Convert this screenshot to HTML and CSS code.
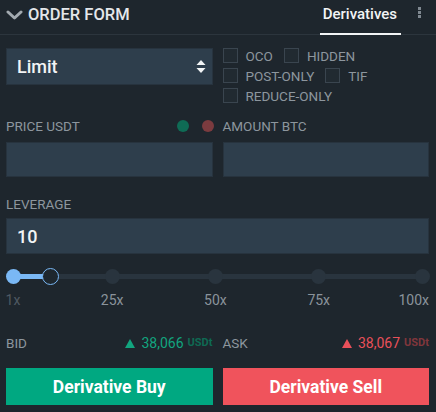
FILE: index.html
```html
<!DOCTYPE html>
<html>
<head>
<meta charset="utf-8">
<link rel="stylesheet" href="styles.css">
</head>
<body>
<div class="panel">
  <header class="head">
    <div class="title">
      <svg class="chev" width="17" height="10" viewBox="0 0 17 10"><polyline points="2,2 8.5,8 15,2" fill="none" stroke="#a3aab0" stroke-width="3" stroke-linecap="round" stroke-linejoin="round"/></svg>
      <span>ORDER FORM</span>
    </div>
    <div class="tabs">
      <div class="tab">Derivatives</div>
      <div class="kebab"><i></i><i></i><i></i></div>
    </div>
  </header>

  <div class="grid row-type">
    <div class="select">
      <span>Limit</span>
      <svg width="10" height="14" viewBox="0 0 10 14"><polygon points="5,0 9.5,5 0.5,5" fill="#f2f4f5"/><polygon points="0.5,8 9.5,8 5,13" fill="#f2f4f5"/></svg>
    </div>
    <div class="checks">
      <div class="crow"><label class="cb"><span class="box"></span>OCO</label><label class="cb"><span class="box"></span>HIDDEN</label></div>
      <div class="crow"><label class="cb"><span class="box"></span>POST-ONLY</label><label class="cb"><span class="box"></span>TIF</label></div>
      <div class="crow"><label class="cb"><span class="box"></span>REDUCE-ONLY</label></div>
    </div>
  </div>

  <div class="grid row-labels">
    <div class="lbl-row"><span class="lbl">PRICE USDT</span><span class="dots"><i class="dot g"></i><i class="dot r"></i></span></div>
    <div class="lbl-row"><span class="lbl">AMOUNT BTC</span></div>
  </div>
  <div class="grid row-inputs">
    <div class="input"></div>
    <div class="input"></div>
  </div>

  <div class="lbl lev-lbl">LEVERAGE</div>
  <div class="input wide"><span>10</span></div>

  <div class="slider">
    <div class="track">
      <div class="fill" style="width: 9.09%"></div>
      <i class="mark on" style="left: 0%"></i>
      <i class="mark" style="left: 24.24%"></i>
      <i class="mark" style="left: 49.49%"></i>
      <i class="mark" style="left: 74.75%"></i>
      <i class="mark" style="left: 100%"></i>
      <i class="handle" style="left: 9.09%"></i>
    </div>
  </div>
  <div class="scale">
    <span class="s first" style="left: 0%">1x</span>
    <span class="s" style="left: 24.24%">25x</span>
    <span class="s" style="left: 49.49%">50x</span>
    <span class="s" style="left: 74.75%">75x</span>
    <span class="s last">100x</span>
  </div>

  <div class="grid row-quote">
    <div class="quote"><span class="lbl">BID</span><span class="px up"><svg class="tri" width="10" height="9" viewBox="0 0 10 9"><polygon points="5,0 10,9 0,9" fill="currentColor"/></svg>38,066 <small>USDt</small></span></div>
    <div class="quote"><span class="lbl">ASK</span><span class="px down"><svg class="tri" width="10" height="9" viewBox="0 0 10 9"><polygon points="5,0 10,9 0,9" fill="currentColor"/></svg>38,067 <small>USDt</small></span></div>
  </div>

  <div class="grid row-btns">
    <button class="btn buy">Derivative Buy</button>
    <button class="btn sell">Derivative Sell</button>
  </div>
</div>
</body>
</html>
```
FILE: styles.css
```css
* { box-sizing: border-box; }
html, body {
  margin: 0;
  padding: 0;
  background: #1e262d;
  font-family: Roboto, "Liberation Sans", Arial, sans-serif;
  color: #8d969e;
}
.panel {
  width: 436px;
  height: 412px;
  padding: 0 7px 0 6px;
  overflow: hidden;
}
.head {
  height: 35px;
  margin: 0 -7px 0 -6px;
  padding: 0 15px 0 6px;
  border-bottom: 1px solid #2c353d;
  display: flex;
  align-items: stretch;
  justify-content: space-between;
}
.title {
  display: flex;
  align-items: center;
  gap: 5px;
  padding-bottom: 6px;
  font-size: 16.5px;
  font-weight: 500;
  color: #e4e7ea;
}
.chev { display: block; margin-top: 1px; }
.tabs { display: flex; align-items: stretch; }
.tab {
  padding: 5px 4px 0 3px;
  margin-bottom: -1px;
  height: 35px;
  font-size: 15px;
  font-weight: 500;
  color: #f2f4f5;
  border-bottom: 2px solid #f2f4f5;
}
.kebab {
  margin-left: 17px;
  padding-top: 7px;
  display: flex;
  flex-direction: column;
  gap: 1px;
}
.kebab i {
  display: block;
  width: 3px;
  height: 3px;
  background: #7f8890;
}
.grid {
  display: grid;
  grid-template-columns: 1fr 1fr;
  column-gap: 10px;
}
.row-type { margin-top: 13px; align-items: start; }
.select {
  height: 37px;
  background: #2e3e4c;
  border: 1px solid #27333e;
  display: flex;
  align-items: center;
  justify-content: space-between;
  padding: 0 6px 0 10px;
  font-size: 18px;
  font-weight: 500;
  color: #f2f4f5;
}
.select svg { display: block; }
.checks { display: flex; flex-direction: column; gap: 5px; }
.crow { display: flex; gap: 11px; height: 15px; align-items: center; }
.cb {
  display: flex;
  align-items: center;
  gap: 8px;
  font-size: 13.5px;
  color: #8d969e;
}
.box {
  width: 15px;
  height: 15px;
  border: 1px solid #3a454f;
  background: #212a31;
}
.row-labels { margin-top: 15px; }
.lbl-row {
  height: 16px;
  display: flex;
  align-items: center;
  justify-content: space-between;
}
.lbl { font-size: 13.5px; line-height: 16px; color: #8d969e; }
.dots { display: flex; gap: 13px; margin-right: -1px; }
.dot { display: block; width: 12px; height: 12px; border-radius: 50%; }
.dot.g { background: #0f6b55; }
.dot.r { background: #7b3b3f; }
.row-inputs { margin-top: 8px; }
.input {
  height: 35px;
  background: #2e3e4c;
  border: 1px solid #27333e;
}
.lev-lbl { margin-top: 19px; }
.input.wide {
  margin-top: 6px;
  height: 36px;
  display: flex;
  align-items: center;
  padding-left: 10px;
  font-size: 18px;
  font-weight: 500;
  color: #f2f4f5;
}
.slider {
  margin-top: 14px;
  height: 16px;
  padding: 0 7px;
  display: flex;
  align-items: center;
}
.track {
  position: relative;
  flex: 1;
  height: 5px;
  background: #29343e;
  border-radius: 3px;
}
.fill {
  position: absolute;
  left: 0; top: 0; bottom: 0;
  background: #7ab8f5;
}
.mark {
  position: absolute;
  top: 50%;
  width: 15px;
  height: 15px;
  margin: -7.5px 0 0 -7.5px;
  border-radius: 50%;
  background: #29343e;
}
.mark.on { background: #7ab8f5; }
.handle {
  position: absolute;
  top: 50%;
  width: 17px;
  height: 17px;
  margin: -8.5px 0 0 -8.5px;
  border-radius: 50%;
  background: #1e272e;
  border: 1.5px solid #7ab8f5;
}
.scale {
  position: relative;
  margin: 8px 7px 0;
  height: 16px;
  font-size: 14px;
  line-height: 16px;
  color: #8a939b;
}
.s { position: absolute; top: 0; transform: translateX(-50%); }
.s.first { color: #4f5962; }
.s.last { left: auto; right: -7px; transform: none; }
.row-quote { margin-top: 27px; }
.quote {
  height: 16px;
  display: flex;
  align-items: center;
  justify-content: space-between;
}
.px {
  display: flex;
  align-items: center;
  font-size: 14px;
  line-height: 16px;
  white-space: nowrap;
}
.px small { font-size: 11px; font-weight: 700; margin-left: 4px; }
.tri { display: block; margin-right: 6px; }
.px.up { color: #12a57f; }
.px.up small { color: #0e6a53; }
.px.down { color: #e9505a; }
.px.down small { color: #80363c; }
.row-btns { margin-top: 17px; }
.btn {
  height: 37px;
  border: 0;
  margin: 0;
  padding: 0;
  font-family: Roboto, "Liberation Sans", Arial, sans-serif;
  font-size: 17.5px;
  font-weight: 700;
  color: #ffffff;
  cursor: pointer;
}
.btn.buy { background: #00a881; }
.btn.sell { background: #f0535c; }
```
